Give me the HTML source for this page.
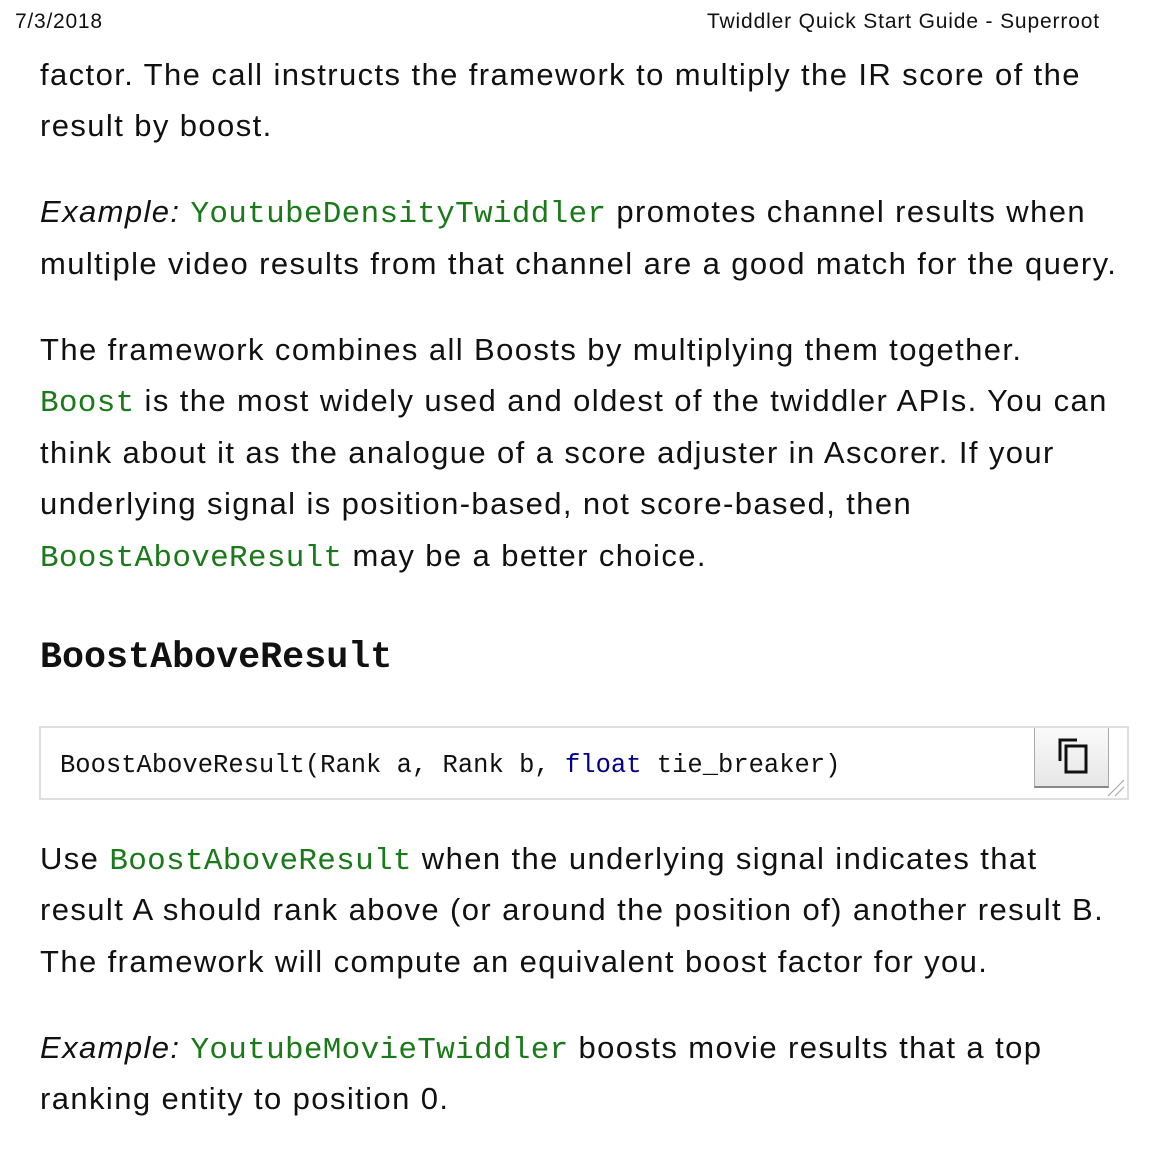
<!DOCTYPE html>
<html><head><meta charset="utf-8"><style>
body{margin:0;width:1155px;height:1149px;background:#fff;position:relative;overflow:hidden;font-family:"Liberation Sans",Arial,sans-serif;color:#111}
.l{position:absolute;left:40px;white-space:nowrap;font-size:31px;line-height:50px;height:50px;letter-spacing:1.4px}
.c{font-family:"Liberation Mono",monospace;color:#1a7a1a;letter-spacing:0.3px}
.hd{position:absolute;top:10px;font-size:21px;line-height:24px;color:#111;letter-spacing:0.85px}
</style></head><body>
<div class="hd" style="left:15px;letter-spacing:0.75px">7/3/2018</div>
<div class="hd" style="left:707px">Twiddler Quick Start Guide - Superroot</div>
<div class="l" style="top:50px">factor. The call instructs the framework to multiply the IR score of the</div>
<div class="l" style="top:101px">result by boost.</div>
<div class="l" style="top:187px"><i>Example:</i> <span class="c">YoutubeDensityTwiddler</span> promotes channel results when</div>
<div class="l" style="top:239px">multiple video results from that channel are a good match for the query.</div>
<div class="l" style="top:325px">The framework combines all Boosts by multiplying them together.</div>
<div class="l" style="top:376px"><span class="c">Boost</span> is the most widely used and oldest of the twiddler APIs. You can</div>
<div class="l" style="top:428px">think about it as the analogue of a score adjuster in Ascorer. If your</div>
<div class="l" style="top:479px">underlying signal is position-based, not score-based, then</div>
<div class="l" style="top:531px"><span class="c">BoostAboveResult</span> may be a better choice.</div>
<div class="l" style="top:633px;font-family:'Liberation Mono',monospace;font-weight:bold;font-size:36.7px;color:#111;letter-spacing:0">BoostAboveResult</div>
<div style="position:absolute;left:39px;top:726px;width:1086px;height:70px;border:2px solid #ddd;background:#fff"></div>
<div style="position:absolute;left:60px;top:749px;font-family:'Liberation Mono',monospace;font-size:25.5px;line-height:34px;white-space:nowrap;color:#111">BoostAboveResult(Rank a, Rank b, <span style="color:#000088">float</span> tie_breaker)</div>
<div style="position:absolute;left:1034px;top:728px;width:73px;height:58px;border:1px solid #aaa;border-top:none;border-bottom:2px solid #888;background:linear-gradient(#fafafa,#e6e6e6)">
<svg width="73" height="58" viewBox="0 0 73 58"><path d="M25 33V12h17" fill="none" stroke="#111" stroke-width="3"/><rect x="31" y="18" width="20" height="26" fill="none" stroke="#111" stroke-width="3"/></svg></div>
<svg style="position:absolute;left:1106px;top:778px" width="20" height="20"><path d="M2 18L18 2M9 18L18 9" stroke="#aaa" stroke-width="1.2"/></svg>
<div class="l" style="top:834px">Use <span class="c">BoostAboveResult</span> when the underlying signal indicates that</div>
<div class="l" style="top:885px">result A should rank above (or around the position of) another result B.</div>
<div class="l" style="top:937px">The framework will compute an equivalent boost factor for you.</div>
<div class="l" style="top:1023px"><i>Example:</i> <span class="c">YoutubeMovieTwiddler</span> boosts movie results that a top</div>
<div class="l" style="top:1074px">ranking entity to position 0.</div>
</body></html>
